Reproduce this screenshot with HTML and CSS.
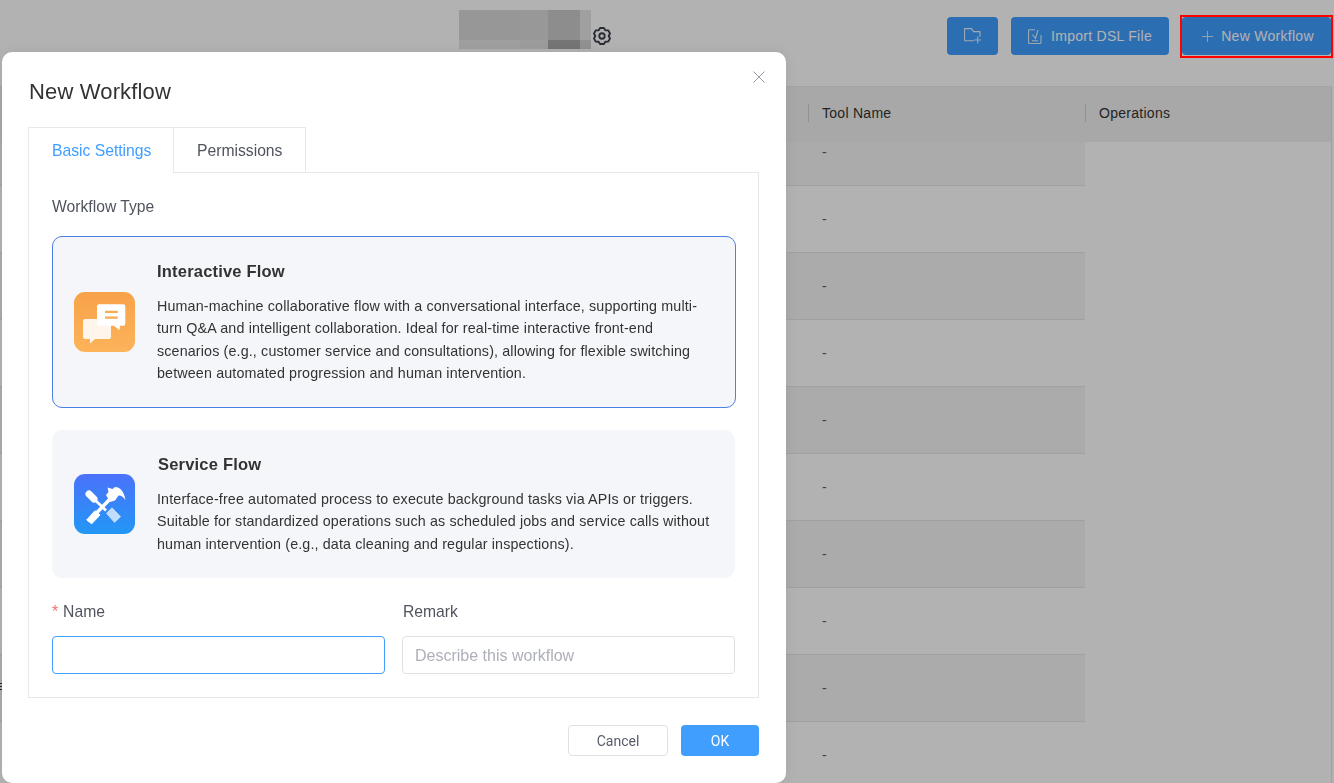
FILE: index.html
```html
<!DOCTYPE html>
<html lang="en">
<head>
<meta charset="utf-8">
<title>New Workflow</title>
<link rel="stylesheet" href="styles.css">
</head>
<body>
<div class="page">
  <header class="topbar">
    <div class="title-group">
      <div class="mosaic">
        <i class="m m1"></i><i class="m m2"></i><i class="m m3"></i><i class="m m4"></i>
        <i class="m m5"></i><i class="m m6"></i><i class="m m7"></i><i class="m m8"></i>
      </div>
      <svg class="gear" viewBox="0 0 24 24" fill="none" stroke="currentColor" stroke-width="2.200" stroke-linejoin="round"><path d="M9.680 2.400L14.320 2.400L16 5.070L19.530 5.200L21.600 8.990L20 12L21.600 15.010L19.530 18.800L16 18.930L14.320 21.600L9.680 21.600L8 18.930L4.470 18.800L2.400 15.010L4 12L2.400 8.990L4.470 5.200L8 5.070Z"/><circle cx="12" cy="12" r="3.300"/></svg>
    </div>
    <div class="actions">
      <button class="btn btn-icon" type="button">
        <svg class="ico" viewBox="0 0 18 16" fill="none" stroke="currentColor" stroke-width="1.100"><path d="M10 12.700H.6V.6h6.900l2 3h6.500v5.100"/><path d="M13.700 8.500v7M10.200 12h7"/></svg>
      </button>
      <button class="btn btn-import" type="button">
        <svg class="ico-import" viewBox="0 0 14 15" fill="none" stroke="currentColor" stroke-width="1.100"><path d="M7 .7H1.500a1 1 0 0 0-1 1v11.800a1 1 0 0 0 1 1h10.500a1 1 0 0 0 1-1V6"/><path d="M4.500 5.500l3 4 2.500-8.500"/><path d="M4 11.800h6"/></svg>
        <span>Import DSL File</span>
      </button>
      <button class="btn btn-new" type="button">
        <svg class="ico-plus" viewBox="0 0 11 11" fill="none" stroke="currentColor" stroke-width="1"><path d="M5.500 0v11M0 5.500h11"/></svg>
        <span>New Workflow</span>
      </button>
    </div>
  </header>

  <section class="table">
    <div class="thead">
      <div class="th th-main"></div>
      <div class="th th-tool">Tool Name</div>
      <div class="th th-ops">Operations</div>
    </div>
    <div class="tbody">
      <div class="rows">
        <div class="row odd"><span>-</span></div>
        <div class="row"><span>-</span></div>
        <div class="row odd"><span>-</span></div>
        <div class="row"><span>-</span></div>
        <div class="row odd"><span>-</span></div>
        <div class="row"><span>-</span></div>
        <div class="row odd"><span>-</span></div>
        <div class="row"><span>-</span></div>
        <div class="row odd"><i class="row-edge"></i><span>-</span></div>
        <div class="row"><span>-</span></div>
      </div>
      <div class="ops-col"></div>
    </div>
  </section>
</div>

<div class="mask"></div>
<div class="highlight"></div>

<div class="dialog">
  <svg class="close" viewBox="0 0 12 12" fill="none" stroke="currentColor" stroke-width=".9"><path d="M.5.5l11 11M11.500.5l-11 11"/></svg>
  <h2 class="dialog-title">New Workflow</h2>
  <div class="tabs">
    <div class="tab tab-active">Basic Settings</div>
    <div class="tab">Permissions</div>
    <div class="tab-fill"></div>
  </div>
  <div class="panel">
    <div class="field-title">Workflow Type</div>
    <div class="card card-active">
      <svg class="card-icon" viewBox="0 0 61 60">
        <defs><linearGradient id="og" x1="0" y1="0" x2="0" y2="1"><stop offset="0" stop-color="#f7a248"/><stop offset="1" stop-color="#fcb35a"/></linearGradient></defs>
        <rect width="61" height="60" rx="11" fill="url(#og)"/>
        <path d="M11 27h24a2 2 0 0 1 2 2v16a2 2 0 0 1-2 2H21l-5 4.500V47h-5a2 2 0 0 1-2-2V29a2 2 0 0 1 2-2z" fill="#fff" opacity=".88"/>
        <path d="M25 12.300h24.300a2 2 0 0 1 2 2V31.700a2 2 0 0 1-2 2H46l-.5 4.500-5.500-4.500H25a2 2 0 0 1-2-2V14.300a2 2 0 0 1 2-2z" fill="#fff"/>
        <path d="M31 18.800h12.700v2.100H31zM31 24.400h12.700v2.300H31z" fill="#f9ab51"/>
      </svg>
      <div class="card-body">
        <div class="card-title">Interactive Flow</div>
        <p class="card-desc">Human-machine collaborative flow with a conversational interface, supporting multi-turn Q&amp;A and intelligent collaboration. Ideal for real-time interactive front-end scenarios (e.g., customer service and consultations), allowing for flexible switching between automated progression and human intervention.</p>
      </div>
    </div>
    <div class="card card-plain">
      <svg class="card-icon" viewBox="0 0 61 60">
        <defs><linearGradient id="bg" x1="0" y1="0" x2="0" y2="1"><stop offset="0" stop-color="#4b72fb"/><stop offset="1" stop-color="#2297f5"/></linearGradient></defs>
        <rect width="61" height="60" rx="11" fill="url(#bg)"/>
        <path d="M15 20l5 5" stroke="#fff" stroke-width="7" stroke-linecap="round" fill="none"/>
        <path d="M20 25l12 11.500" stroke="#fff" stroke-width="2.800" fill="none"/>
        <path d="M32.500 39.300l5.500-5.500 8.500 9-6 5.500z" fill="#fff" stroke="#fff" stroke-width="1" stroke-linejoin="round" opacity=".7"/>
        <path d="M12.700 46l5 3.800 8.300-8.800-5-4.300z" fill="#fff" stroke="#fff" stroke-width="1" stroke-linejoin="round"/>
        <path d="M23 38.500L36 25" stroke="#fff" stroke-width="3.500" fill="none"/>
        <path d="M32 21l2.500-3-1-4.500 5 1.500 2.500-2c5 0 9 4 10.500 13-2.500-3.500-4.500-5-7-4.500l-3.500 5-5 1.500z" fill="#fff"/>
      </svg>
      <div class="card-body">
        <div class="card-title card-title-2">Service Flow</div>
        <p class="card-desc">Interface-free automated process to execute background tasks via APIs or triggers. Suitable for standardized operations such as scheduled jobs and service calls without human intervention (e.g., data cleaning and regular inspections).</p>
      </div>
    </div>
    <div class="form-row">
      <div class="field">
        <label class="label"><span class="req">*</span>Name</label>
        <input class="input input-focus" type="text">
      </div>
      <div class="field">
        <label class="label label-remark">Remark</label>
        <input class="input" type="text" placeholder="Describe this workflow">
      </div>
    </div>
  </div>
  <div class="footer">
    <button class="dbtn dbtn-cancel" type="button">Cancel</button>
    <button class="dbtn dbtn-ok" type="button">OK</button>
  </div>
</div>
</body>
</html>
```
FILE: styles.css
```css
* { box-sizing: border-box; }
html, body { margin: 0; padding: 0; height: 783px; overflow: hidden; }
body { font-family: "Liberation Sans", Arial, sans-serif; color: #333; background: #fff; }

.page { width: 1334px; height: 783px; overflow: hidden; }
.topbar { display: flex; height: 86px; position: relative; }
.title-group { display: flex; align-items: flex-start; margin-left: 459px; padding-top: 10px; }
.mosaic { width: 132px; height: 39px; display: grid; grid-template-columns: 61px 28px 32px 11px; grid-template-rows: 30px 9px; }
.m { display: block; }
.m1 { background: #d8d8d8; } .m2 { background: #dadada; } .m3 { background: #cacaca; } .m4 { background: #e6e6e6; }
.m5 { background: #e4e4e4; } .m6 { background: #e0e0e0; } .m7 { background: #a8a8a8; } .m8 { background: #d0d0d0; }
.gear { width: 20px; height: 20px; margin: 16px 0 0 1px; color: #3a3f4b; }
.actions { margin-left: auto; display: flex; gap: 13px; padding: 17px 3px 0 0; align-items: flex-start; }
.btn { height: 38px; border: 0; border-radius: 4px; background: #409eff; color: #fff; font: 14px "Liberation Sans", Arial, sans-serif; letter-spacing: .28px; display: flex; align-items: center; justify-content: center; padding: 0; }
.btn-icon { width: 51px; }
.btn-import { width: 158px; gap: 9px; }
.btn-new { width: 149px; gap: 8px; padding-left: 3px; }
.ico { width: 18px; height: 16px; opacity: .85; }
.ico-import { width: 14px; height: 15px; opacity: .85; }
.ico-plus { width: 11px; height: 11px; opacity: .75; }

.table { width: 1332px; border-right: 1px solid #e4e4e4; height: 697px; }
.thead { height: 56px; background: #f1f1f1; display: flex; align-items: center; border-top: 1px solid #ebebef; padding-bottom: 3px; font-size: 14px; letter-spacing: .28px; color: #333; }
.th { height: 18px; line-height: 18px; padding-left: 13px; }
.th-main { width: 808px; padding: 0; }
.th-tool { width: 277px; border-left: 1px solid #d0d0d0; }
.th-ops { border-left: 1px solid #d0d0d0; }
.tbody { display: flex; height: 641px; overflow: hidden; }
.rows { width: 1085px; margin-top: -23px; }
.row { position: relative; height: 67px; border-bottom: 1px solid #e6e6ea; padding-left: 822px; display: flex; align-items: center; font-size: 14px; color: #575d6c; background: #fff; }
.row.odd { background: #f5f5f5; }
.row span { display: block; }
.row-edge { position: absolute; left: 0; top: 28px; width: 2px; height: 9px; background: repeating-linear-gradient(#2a3a55 0 1px, transparent 1px 3px); }
.ops-col { flex: 1; background: #fff; }

.mask { position: fixed; inset: 0; background: rgba(0, 0, 0, .3); }
.highlight { position: fixed; left: 1180px; top: 15px; width: 153px; height: 43px; border: 2px solid #f00; }

.dialog { position: fixed; left: 2px; top: 52px; width: 784px; height: 731px; background: #fff; border-radius: 10px; padding: 28px 27px 0 26px; box-shadow: 0 0 16px rgba(0, 0, 0, .08); }
.close { position: absolute; left: 751px; top: 19px; width: 12px; height: 12px; color: #8a8e99; }
.dialog-title { margin: 0; font-size: 22px; font-weight: 400; letter-spacing: .15px; line-height: 24px; height: 47px; color: #333; padding-left: 1px; }
.tabs { display: flex; height: 46px; }
.tab { height: 46px; border: 1px solid #e8e8e8; font-size: 15.700px; line-height: 45px; padding: 0 23px; color: #50545e; margin-left: -1px; background: #fff; white-space: nowrap; }
.tab:first-child { margin-left: 0; width: 146px; }
.tab + .tab { width: 133px; }
.tab-active { color: #409eff; border-bottom-color: #fff; }
.tab-fill { flex: 1; border-bottom: 1px solid #e8e8e8; }
.panel { border: 1px solid #e8e8e8; border-top: 0; height: 525px; padding: 0 23px; }
.field-title { font-size: 15.700px; line-height: 20px; padding-top: 24px; height: 63px; color: #50545e; }
.card { display: flex; align-items: center; border-radius: 10px; background: #f5f6fa; width: 684px; }
.card-active { height: 172px; border: 1px solid #4d80e6; padding-left: 21px; }
.card-plain { height: 148px; width: 683px; margin-top: 22px; padding-left: 22px; }
.card-icon { width: 61px; height: 60px; flex: none; }
.card-body { margin-left: 22px; width: 553px; padding-top: 1px; }
.card-title { font-size: 16.500px; font-weight: 700; letter-spacing: .2px; line-height: 20px; color: #333; margin-bottom: 14px; }
.card-title-2 { padding-left: 1px; }
.card-desc { margin: 0; font-size: 14.300px; letter-spacing: .14px; line-height: 22.500px; color: #333; }
.form-row { display: flex; gap: 17px; margin-top: 22px; }
.field { width: 333px; }
.label { display: block; font-size: 15.700px; line-height: 22px; height: 36px; padding-top: 1px; color: #50545e; }
.label-remark { padding-left: 1px; }
.req { color: #f66f6a; margin-right: 5px; }
.input { display: block; width: 333px; height: 38px; border: 1px solid #dfe1e6; border-radius: 4px; padding: 1px 12px 0; font: 16px "Liberation Sans", Arial, sans-serif; color: #333; outline: 0; background: #fff; }
.input::placeholder { color: #adb0b8; opacity: 1; }
.input-focus { border-color: #409eff; }
.footer { display: flex; justify-content: flex-end; gap: 13px; margin-top: 27px; }
.dbtn { height: 31px; border-radius: 4px; font: 14px Roboto, "Liberation Sans", sans-serif; padding: 0; }
.dbtn-cancel { width: 100px; background: #fff; border: 1px solid #dfe1e6; color: #575d6c; }
.dbtn-ok { width: 78px; background: #409eff; border: 0; color: #fff; }
```
